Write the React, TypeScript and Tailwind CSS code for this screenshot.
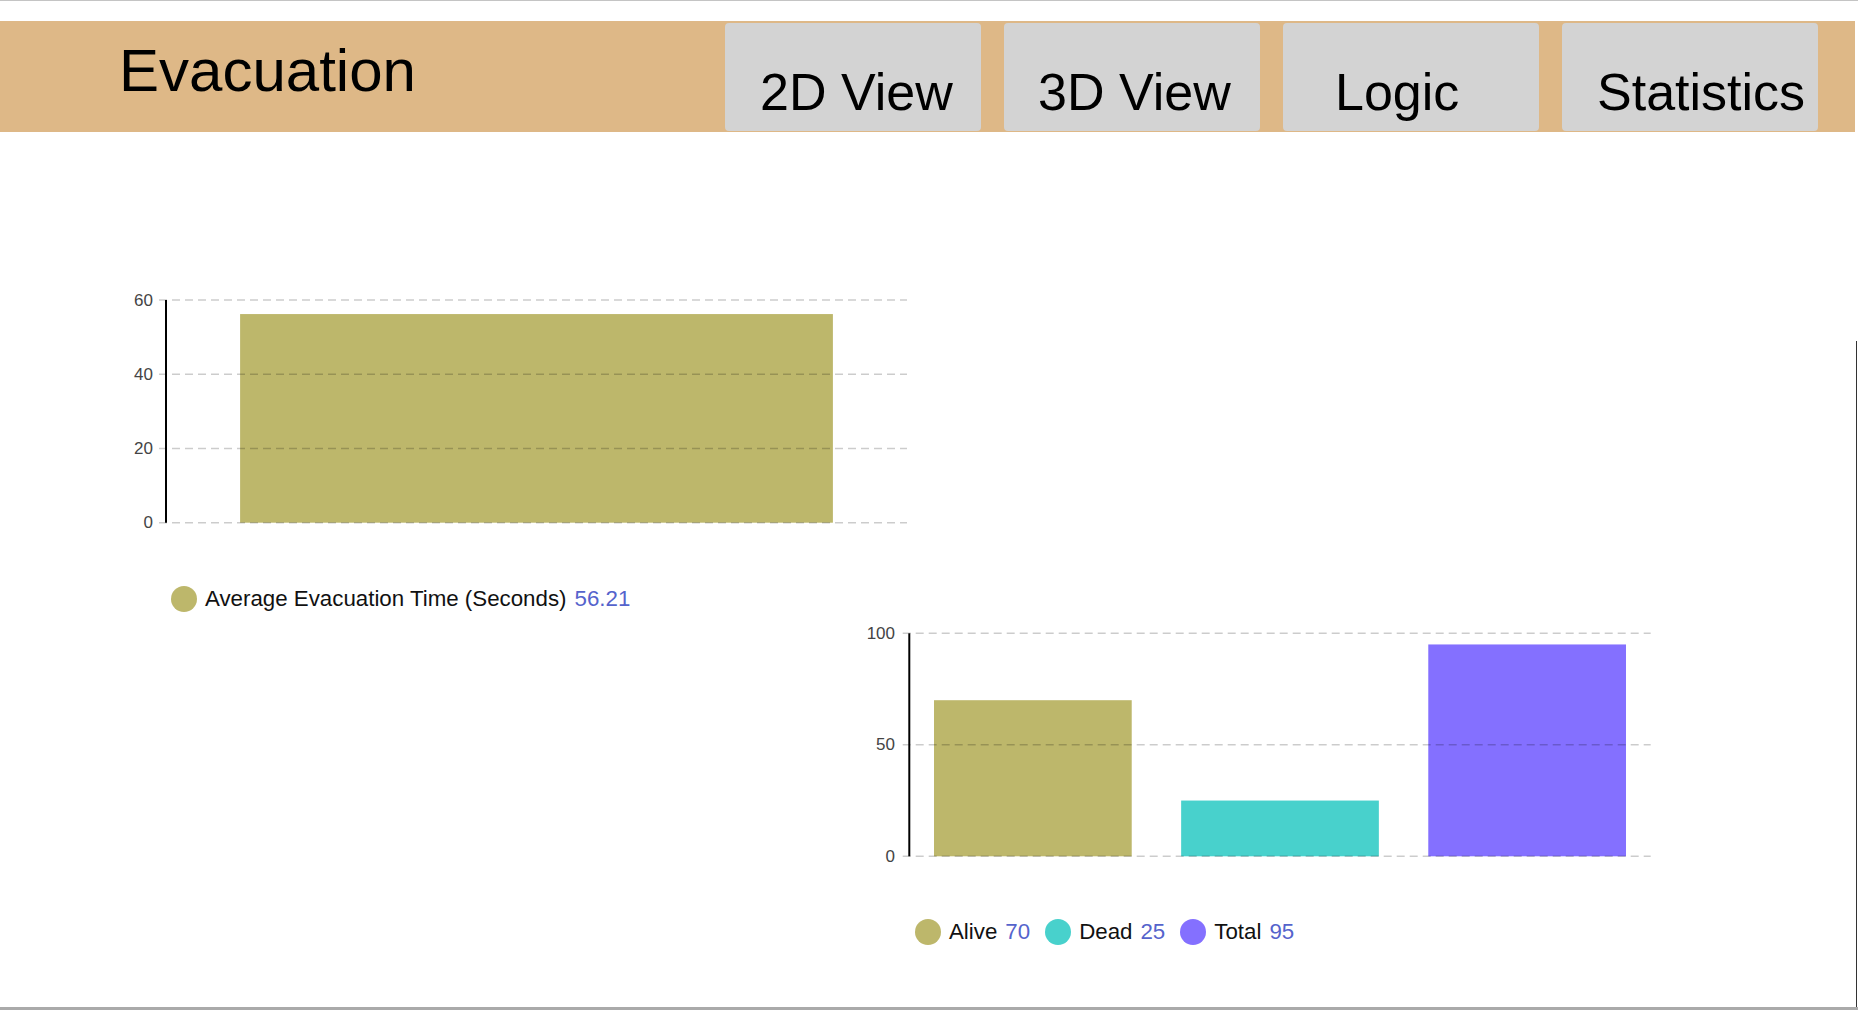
import React from "react";

type Bar = { label: string; value: number; color: string };

// the Logic label sits further in than the others in the original
const tabs = [
  { label: "2D View", pad: "pl-[35px]" },
  { label: "3D View", pad: "pl-[34px]" },
  { label: "Logic", pad: "pl-[52px]" },
  { label: "Statistics", pad: "pl-[35px]" },
];

const timeData: Bar[] = [{ label: "Average Evacuation Time (Seconds)", value: 56.21, color: "#BDB76B" }];

const peopleData: Bar[] = [
  { label: "Alive", value: 70, color: "#BDB76B" },
  { label: "Dead", value: 25, color: "#48D1CC" },
  { label: "Total", value: 95, color: "#8470FF" },
];

type ChartProps = {
  width: number;
  height: number;
  left: number;
  right: number;
  top: number;
  bottom: number;
  gridStart: number;
  labelX: number;
  ticks: number[];
  max: number;
  bars: Bar[];
};

// simple bar chart, grid drawn over the bars like the original
function BarChart({ width, height, left, right, top, bottom, gridStart, labelX, ticks, max, bars }: ChartProps) {
  const cat = (right - left) / bars.length;
  const y = (v: number) => bottom - (v / max) * (bottom - top);
  return (
    <svg width={width} height={height} className="block">
      {bars.map((b, i) => (
        <rect
          key={b.label}
          x={left + cat * i + cat * 0.1}
          y={y(b.value)}
          width={cat * 0.8}
          height={bottom - y(b.value)}
          fill={b.color}
        />
      ))}
      {ticks.map((t) => (
        <g key={t}>
          <line
            x1={gridStart}
            x2={right}
            y1={y(t)}
            y2={y(t)}
            stroke="#000"
            strokeOpacity={0.2}
            strokeWidth={1.5}
            strokeDasharray="8 5"
          />
          <text
            x={labelX}
            y={y(t)}
            textAnchor="end"
            dominantBaseline="central"
            fontSize={17}
            fill="#444"
            fontFamily="'Liberation Sans', Arial, sans-serif"
          >
            {t}
          </text>
        </g>
      ))}
      <line x1={left} x2={left} y1={top} y2={bottom} stroke="#000" strokeWidth={2} />
    </svg>
  );
}

function Legend({ bars }: { bars: Bar[] }) {
  return (
    <div className="flex items-center gap-[15px] text-[22.3px] leading-none">
      {bars.map((b) => (
        <div key={b.label} className="flex items-center gap-[8px]">
          <span className="w-[26px] h-[26px] rounded-full" style={{ backgroundColor: b.color }} />
          <span className="text-[#111]">{b.label}</span>
          <span className="text-[#5563cc]">{b.value}</span>
        </div>
      ))}
    </div>
  );
}

export default function App() {
  return (
    <div
      className="relative w-[1858px] h-[1010px] bg-white border-t border-[#c4c4c4] border-b-[3px] border-b-[#aaaaaa] overflow-hidden"
      style={{ fontFamily: "'Liberation Sans', Arial, sans-serif" }}
    >
      {/* Header */}
      <div className="mt-[20px] mr-[3px] h-[111px] bg-[#DEB887] flex items-start">
        <h1 className="pl-[119px] pt-[20px] text-[60px] leading-none text-black font-normal">Evacuation</h1>
        <nav className="ml-auto mr-[37px] mt-[2px] flex gap-[23px]">
          {tabs.map((t) => (
            <button
              key={t.label}
              className={`w-[256px] bg-[#D3D3D3] rounded-[4px] pt-[43px] pb-[13px] text-[52px] leading-none text-black text-left ${t.pad}`}
            >
              <span className="block">{t.label}</span>
            </button>
          ))}
        </nav>
      </div>

      {/* Charts */}
      <div className="flex flex-col">
        <div className="mt-[153px] ml-[100px]">
          <BarChart
            width={820}
            height={250}
            left={66}
            right={807}
            top={15}
            bottom={237.7}
            gridStart={59}
            labelX={53}
            ticks={[0, 20, 40, 60]}
            max={60}
            bars={timeData}
          />
        </div>
        <div className="mt-[51px] ml-[171px]">
          <Legend bars={timeData} />
        </div>

        <div className="mt-[7px] ml-[840px]">
          <BarChart
            width={820}
            height={250}
            left={69.3}
            right={810.7}
            top={14.3}
            bottom={237.3}
            gridStart={62.7}
            labelX={55}
            ticks={[0, 50, 100]}
            max={100}
            bars={peopleData}
          />
        </div>
        <div className="mt-[50px] ml-[915px]">
          <Legend bars={peopleData} />
        </div>
      </div>

      {/* window edge */}
      <div className="absolute right-[1px] top-[340px] bottom-0 w-[1px] bg-[#333]" />
    </div>
  );
}
